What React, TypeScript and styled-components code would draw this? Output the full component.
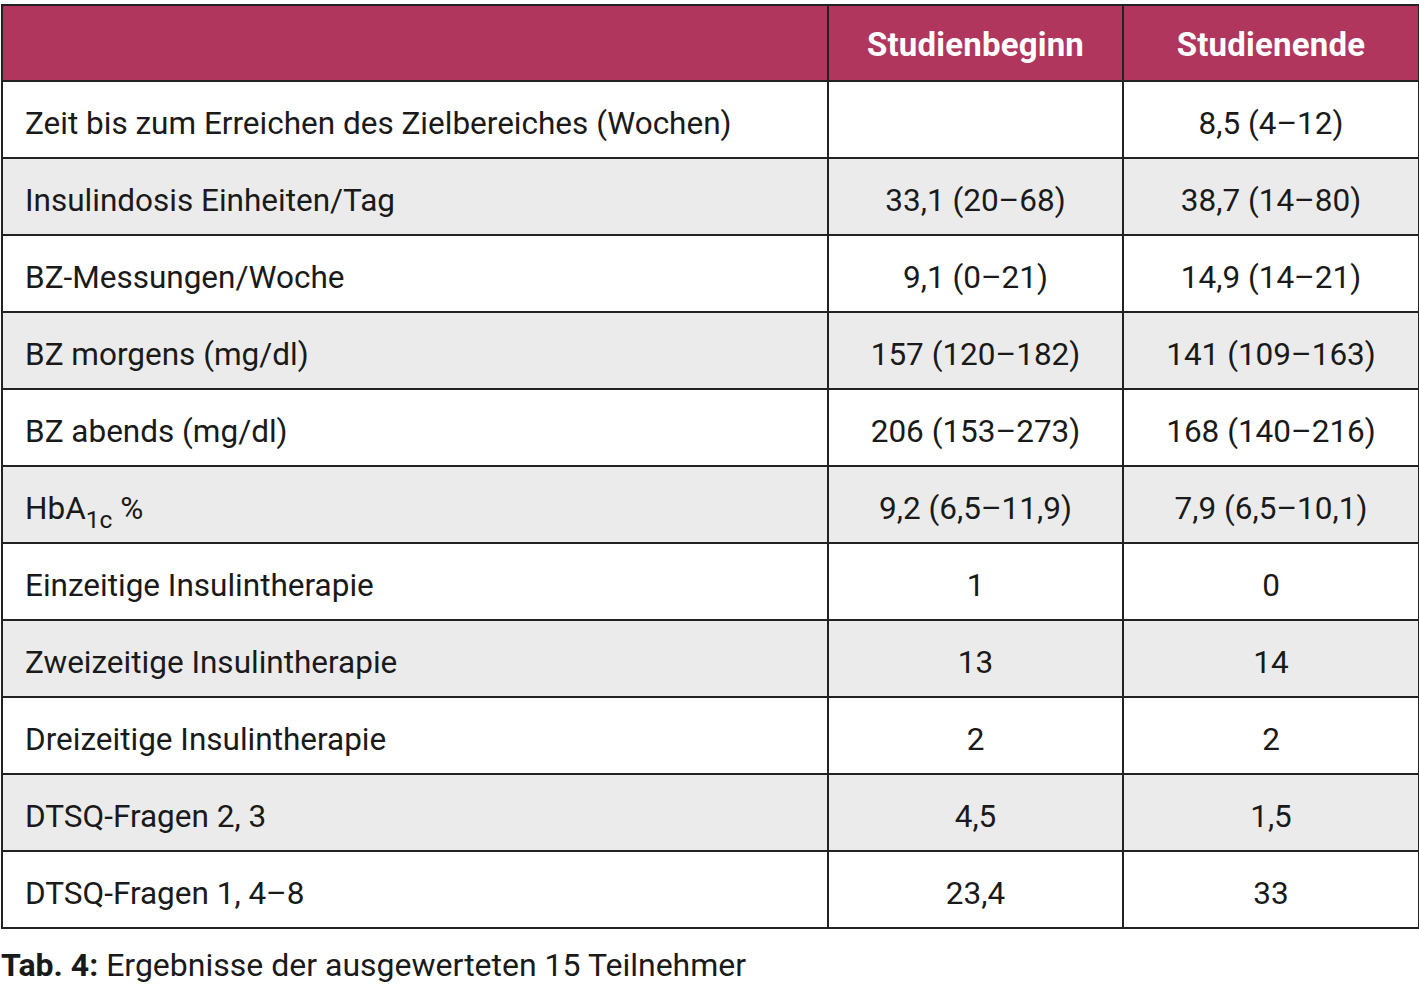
import React from "react";
import styled, { createGlobalStyle } from "styled-components";

const Global = createGlobalStyle`
  html, body { margin: 0; padding: 0; background: #fff; }
  body { font-family: Roboto, "Liberation Sans", sans-serif; color: #1a1a1a; }
`;

const Page = styled.div`
  padding: 4px 1px 0 1px;
  width: 1417px;
`;

const Table = styled.table`
  border-collapse: collapse;
  width: 1417px;
  table-layout: fixed;
  font-size: 31.5px;
`;

const HeadCell = styled.th`
  background: #b0365e;
  color: #fff;
  font-weight: 700;
  font-size: 33px;
  height: 71px;
  border: 2px solid #222;
  text-align: center;
  padding: 3px 0 0 0;
  letter-spacing: 0.2px;
`;

const Row = styled.tr<{ $shade: boolean }>`
  background: ${(p) => (p.$shade ? "#ebebeb" : "#fff")};
  height: 77px;
`;

const Cell = styled.td<{ $label?: boolean }>`
  border: 2px solid #222;
  padding: 7px 0 0 ${(p) => (p.$label ? "22px" : "0")};
  text-align: ${(p) => (p.$label ? "left" : "center")};
  font-weight: 400;
`;

const Sub = styled.sub`
  font-size: 0.78em;
  vertical-align: -0.35em;
  line-height: 0;
`;

const Caption = styled.p`
  margin: 17px 0 0 0;
  font-size: 32px;
  color: #1a1a1a;
`;

const rows: [React.ReactNode, string, string][] = [
  ["Zeit bis zum Erreichen des Zielbereiches (Wochen)", "", "8,5 (4–12)"],
  ["Insulindosis Einheiten/Tag", "33,1 (20–68)", "38,7 (14–80)"],
  ["BZ-Messungen/Woche", "9,1 (0–21)", "14,9 (14–21)"],
  ["BZ morgens (mg/dl)", "157 (120–182)", "141 (109–163)"],
  ["BZ abends (mg/dl)", "206 (153–273)", "168 (140–216)"],
  [
    <>
      HbA<Sub>1c</Sub> %
    </>,
    "9,2 (6,5–11,9)",
    "7,9 (6,5–10,1)",
  ],
  ["Einzeitige Insulintherapie", "1", "0"],
  ["Zweizeitige Insulintherapie", "13", "14"],
  ["Dreizeitige Insulintherapie", "2", "2"],
  ["DTSQ-Fragen 2, 3", "4,5", "1,5"],
  ["DTSQ-Fragen 1, 4–8", "23,4", "33"],
];

export default function App() {
  return (
    <Page>
      <Global />
      <Table>
        <colgroup>
          <col style={{ width: 826 }} />
          <col style={{ width: 295 }} />
          <col style={{ width: 296 }} />
        </colgroup>
        <thead>
          <tr>
            <HeadCell></HeadCell>
            <HeadCell>Studienbeginn</HeadCell>
            <HeadCell>Studienende</HeadCell>
          </tr>
        </thead>
        <tbody>
          {rows.map((r, i) => (
            <Row key={i} $shade={i % 2 === 1}>
              <Cell $label>{r[0]}</Cell>
              <Cell>{r[1]}</Cell>
              <Cell>{r[2]}</Cell>
            </Row>
          ))}
        </tbody>
      </Table>
      <Caption>
        <b>Tab. 4:</b> Ergebnisse der ausgewerteten 15 Teilnehmer
      </Caption>
    </Page>
  );
}
